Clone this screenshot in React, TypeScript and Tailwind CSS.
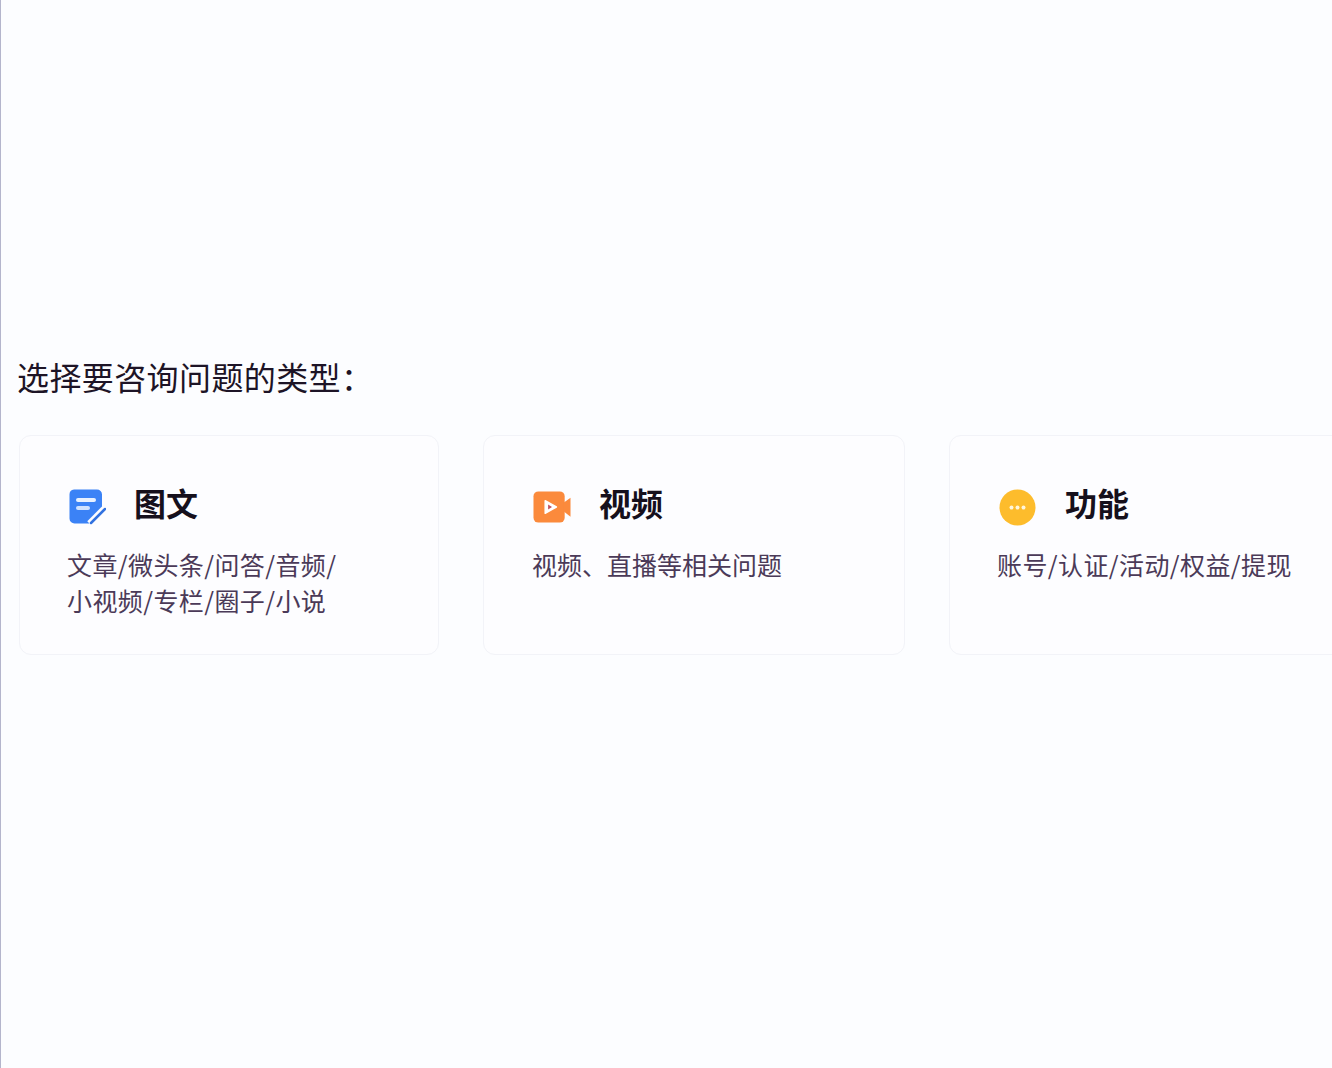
import React from "react";

const cjk = "font-['Noto_Sans_CJK_SC','Liberation_Sans',sans-serif]";

const DocIcon = () => (
  <svg width="38" height="38" viewBox="0 0 38 38" fill="none">
    <path
      d="M6 1.500h23a5 5 0 0 1 5 5V21L21 35.500H6.500a5 5 0 0 1-5-5V6.500a5 5 0 0 1 4.500-5Z"
      fill="#3b82f6"
    />
    <rect x="8" y="10" width="20" height="4" rx="2" fill="#e8f1ff" />
    <rect x="8" y="18" width="14" height="4" rx="2" fill="#cfe1ff" />
    <path d="M21 35 L36 20" stroke="#fdfdff" strokeWidth="5" />
    <path d="M23 35 L37 21" stroke="#3272e0" strokeWidth="2.500" strokeLinecap="round" />
  </svg>
);

const VideoIcon = () => (
  <svg width="39" height="34" viewBox="0 0 39 34" fill="none">
    <rect x="0.500" y="1" width="32" height="32" rx="5" fill="#fb8a3c" />
    <path d="M31 13 L38.500 7.500 V27 L31 21 Z" fill="#fb8a3c" />
    <path d="M12.500 10.500 L24 17 L12.500 23.500 Z" fill="#ffffff" stroke="#ffffff" strokeWidth="1.500" strokeLinejoin="round" />
    <path d="M15.500 14.500 L19.500 17 L15.500 19.500 Z" fill="#c2505f" />
  </svg>
);

const MoreIcon = () => (
  <svg width="37" height="37" viewBox="0 0 37 37" fill="none">
    <circle cx="18.500" cy="18.500" r="18" fill="#fdbc2c" />
    <circle cx="12.500" cy="18.500" r="2" fill="#fff6dc" />
    <circle cx="18.500" cy="18.500" r="2" fill="#fff6dc" />
    <circle cx="24.500" cy="18.500" r="2" fill="#fff6dc" />
  </svg>
);

const cards = [
  {
    title: "图文",
    icon: <DocIcon />,
    lines: ["文章/微头条/问答/音频/", "小视频/专栏/圈子/小说"],
    width: "w-[420px] pl-[47px]",
    head: "pl-[1px] gap-[28px]",
    text: "tracking-[0.4px]",
  },
  {
    title: "视频",
    icon: <VideoIcon />,
    lines: ["视频、直播等相关问题"],
    width: "w-[422px] pl-[48px]",
    head: "pl-[1px] gap-[28px]",
    text: "tracking-[0px]",
  },
  {
    title: "功能",
    icon: <MoreIcon />,
    lines: ["账号/认证/活动/权益/提现"],
    width: "w-[423px] pl-[47px]",
    head: "pl-[1px] gap-[29px]",
    text: "tracking-[0.4px]",
  },
];

export default function App() {
  return (
    <div
      className={`h-[1068px] w-[1332px] overflow-hidden border-l border-[#b4b5cc] bg-[#fcfdff] ${cjk}`}
    >
      <div className="pt-[355px] pl-[16px]">
        <h1 className="text-[32px] leading-[42px] font-normal tracking-[0.4px] text-[#1d1426]">
          选择要咨询问题的类型：
        </h1>
        <div className="mt-[38px] flex gap-[44px] pl-[2px]">
          {cards.map((card) => (
            <div
              key={card.title}
              className={`h-[220px] shrink-0 rounded-[12px] border border-[#f2f3f8] bg-[#fdfdff] pt-[43px] ${card.width}`}
            >
              <div className={`flex h-[46px] items-center ${card.head}`}>
                <div className="flex w-[38px] justify-center pt-[10px]">{card.icon}</div>
                <span className="text-[32px] leading-[46px] font-bold text-[#16101c]">
                  {card.title}
                </span>
              </div>
              <div className={`mt-[21px] text-[25px] leading-[36px] text-[#4b3a58] ${card.text}`}>
                {card.lines.map((line) => (
                  <div key={line} className="whitespace-nowrap">
                    {line}
                  </div>
                ))}
              </div>
            </div>
          ))}
        </div>
      </div>
    </div>
  );
}
